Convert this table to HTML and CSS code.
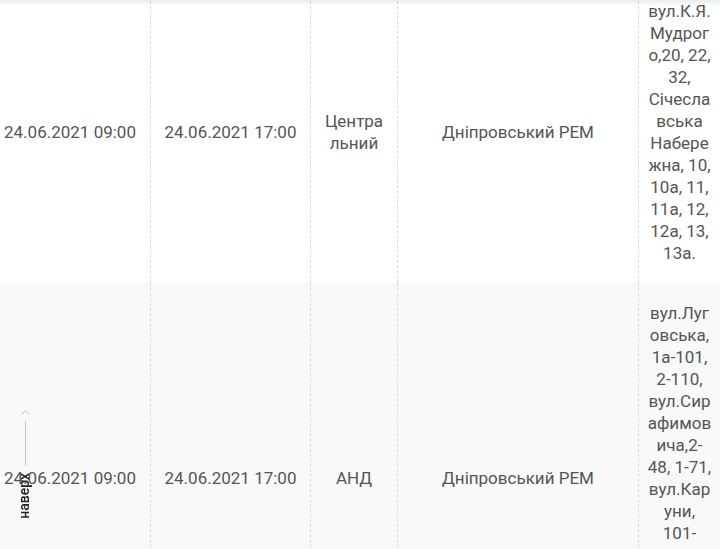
FILE: index.html
```html
<!DOCTYPE html>
<html lang="uk">
<head>
<meta charset="utf-8">
<title>Відключення</title>
<link rel="stylesheet" href="styles.css">
</head>
<body>
<div class="top-shadow"></div>
<table class="outages">
  <colgroup>
    <col class="c-start"><col class="c-end"><col class="c-area"><col class="c-rem"><col class="c-addr">
  </colgroup>
  <tbody>
    <tr>
      <td>24.06.2021 09:00</td>
      <td>24.06.2021 17:00</td>
      <td class="narrow">Центральний</td>
      <td>Дніпровський РЕМ</td>
      <td class="addr">вул.К.Я. Мудрого,20, 22, 32, Січеславська Набережна, 10, 10а, 11, 11а, 12, 12а, 13, 13а.</td>
    </tr>
    <tr class="alt">
      <td>24.06.2021 09:00</td>
      <td>24.06.2021 17:00</td>
      <td class="narrow">АНД</td>
      <td>Дніпровський РЕМ</td>
      <td class="addr">вул.Луговська, 1а-101, 2-110, вул.Сирафимовича,2-48, 1-71, вул.Каруни, 101- 133, 102- 134, 3-9, 4-12, 1-15.</td>
    </tr>
  </tbody>
</table>
<a class="to-top" href="#">
  <svg class="chev" width="9" height="5" viewBox="0 0 9 5"><path d="M0.5 4.5 L4.5 0.8 L8.5 4.5" fill="none" stroke="#bdbdbd" stroke-width="1"/></svg>
  <span class="bar"></span>
  <span class="lbl">наверх</span>
</a>
</body>
</html>
```

FILE: styles.css
```css
html, body {
  margin: 0;
  padding: 0;
  background: #fff;
  overflow: hidden;
}
body {
  font-family: Roboto, "Noto Sans", sans-serif;
  color: #555;
}
.top-shadow {
  position: fixed;
  top: 0;
  left: 0;
  right: 0;
  height: 6px;
  background: linear-gradient(to bottom, rgba(0,0,0,0.08), rgba(0,0,0,0));
  z-index: 5;
}
.outages {
  border-collapse: separate;
  border-spacing: 0;
  table-layout: fixed;
  width: 753px;
  margin: -19px 0 0 -10px;
  font-size: 17px;
  line-height: 22px;
}
.c-start { width: 161px; }
.c-end { width: 160px; }
.c-area { width: 87px; }
.c-rem { width: 241px; }
.c-addr { width: 104px; }
.outages td {
  box-sizing: border-box;
  padding: 19px 10px;
  text-align: center;
  vertical-align: middle;
  border-right: 1px dashed #dcdcdc;
  overflow-wrap: break-word;
  word-wrap: break-word;
}
.outages td.narrow {
  padding-left: 12px;
  padding-right: 12px;
}
.outages td.addr {
  padding-left: 8px;
  padding-right: 30px;
}
.outages tr.alt td {
  background: #f9f9f9;
}
.to-top {
  position: fixed;
  left: 17px;
  top: 410px;
  width: 14px;
  display: flex;
  flex-direction: column;
  align-items: center;
  text-decoration: none;
  color: #222;
}
.to-top .chev {
  display: block;
  margin-left: 2px;
}
.to-top .bar {
  display: block;
  width: 1px;
  height: 44px;
  background: #c4c4c4;
  margin: 6px 0 0 2px;
}
.to-top .lbl {
  writing-mode: vertical-rl;
  transform: rotate(180deg);
  font-family: Roboto, sans-serif;
  font-size: 14px;
  font-weight: 500;
  line-height: 14px;
  margin-top: 8px;
}
```
